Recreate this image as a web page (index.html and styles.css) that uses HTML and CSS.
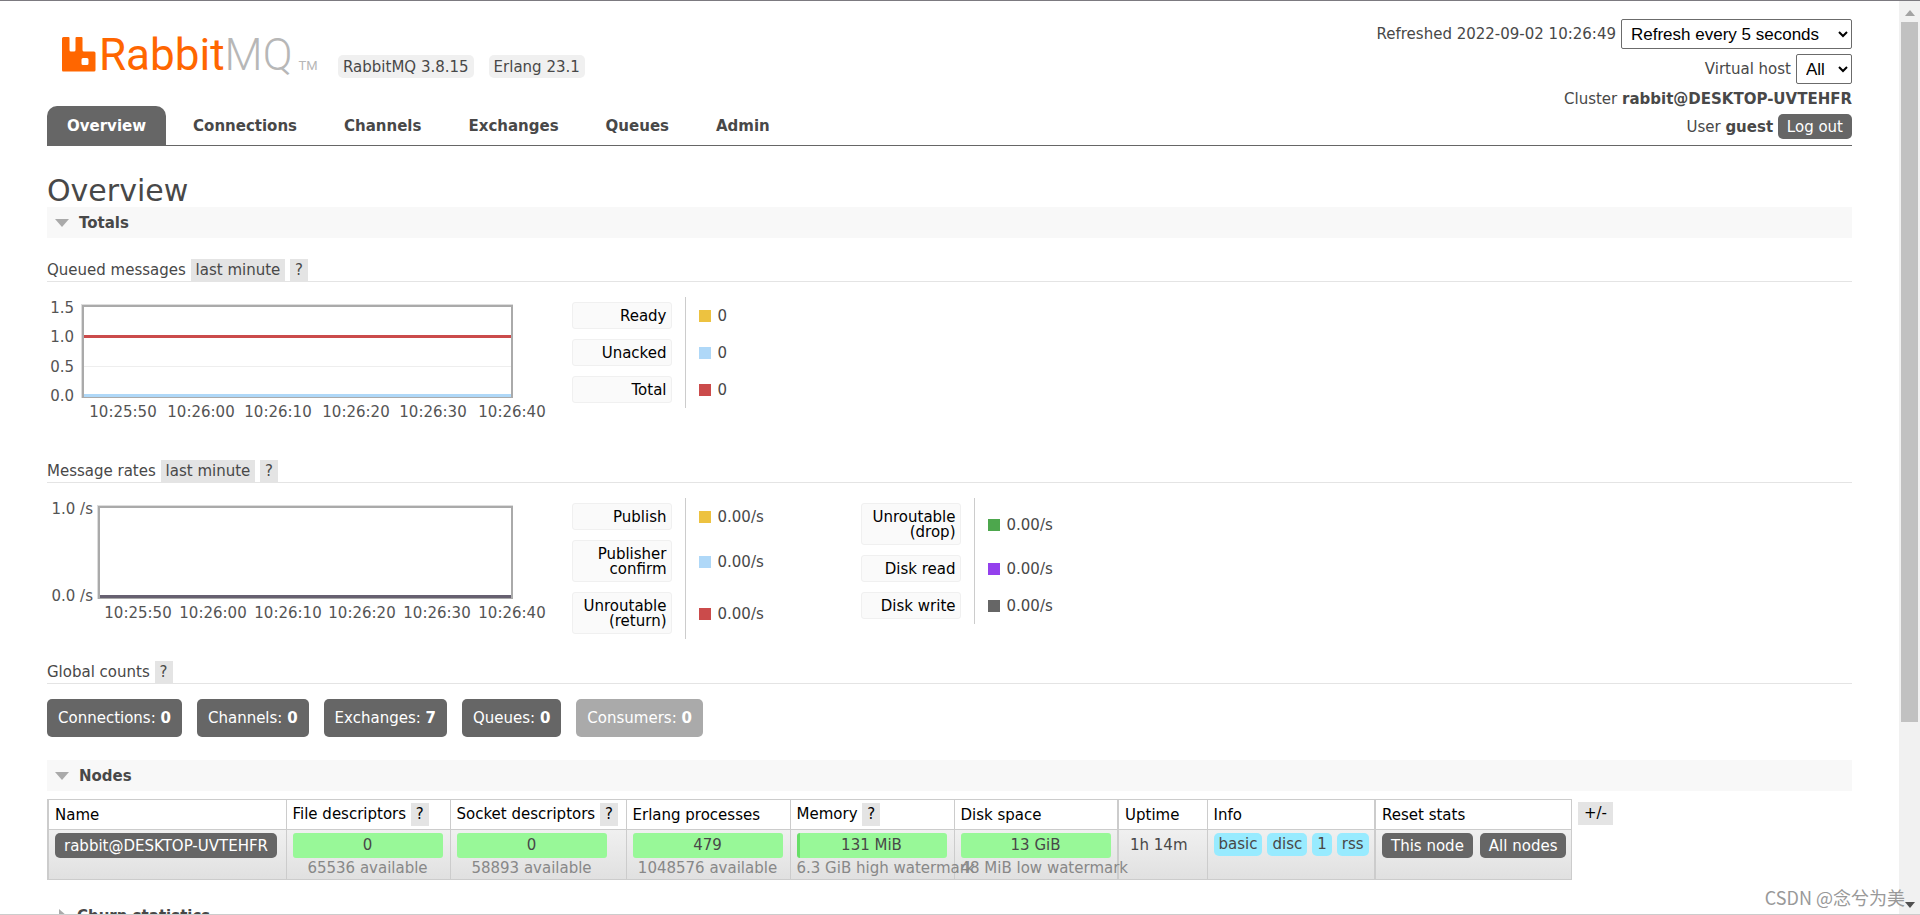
FILE: index.html
```html
<!DOCTYPE html>
<html lang="en">
<head>
<meta charset="utf-8">
<title>RabbitMQ Management</title>
<link rel="stylesheet" href="styles.css">
</head>
<body>
<div class="window">
<div class="page">
  <header class="header">
    <div class="brand">
      <a class="logo" href="#" aria-label="RabbitMQ">
        <svg class="logo-mark" viewBox="0 0 34 35" aria-hidden="true"><path fill="#f60" fill-rule="evenodd" d="M1.500 0h5q1 0 1 1v12q0 1.500 1.500 1.500h3q1.500 0 1.500-1.500V1q0-1 1-1h5q1 0 1 1v12q0 1.500 1.500 1.500h10q1.500 0 1.500 1.500v17q0 1.500-1.500 1.500h-31Q0 34.500 0 33V1.500Q0 0 1.500 0zM21 21q-1.500 0-1.500 1.500v4q0 1.500 1.500 1.500h4q1.500 0 1.500-1.500v-4q0-1.500-1.500-1.500z"/></svg>
        <span class="logo-text">Rabbit<span class="logo-mq">MQ</span></span><span class="logo-tm">TM</span>
      </a>
      <span class="version">RabbitMQ 3.8.15</span>
      <span class="version">Erlang 23.1</span>
    </div>
    <div class="status">
      <div class="status-row"><label for="refresh">Refreshed 2022-09-02 10:26:49</label><select id="refresh" class="select select-refresh"><option>Refresh every 5 seconds</option></select></div>
      <div class="status-row"><label for="vhost">Virtual host</label><select id="vhost" class="select select-vhost"><option>All</option></select></div>
      <div class="status-line">Cluster <b>rabbit@DESKTOP-UVTEHFR</b></div>
      <div class="status-line">User <b>guest</b> <button class="button">Log out</button></div>
    </div>
    <nav class="tabs">
      <a class="tab tab-active" href="#">Overview</a>
      <a class="tab" href="#">Connections</a>
      <a class="tab" href="#">Channels</a>
      <a class="tab" href="#">Exchanges</a>
      <a class="tab" href="#">Queues</a>
      <a class="tab" href="#">Admin</a>
    </nav>
  </header>

  <main>
    <h1 class="title">Overview</h1>
    <h2 class="section"><svg class="arrow" viewBox="0 0 14 8" aria-hidden="true"><path d="M0 0h14L7 8z"/></svg>Totals</h2>

    <h3 class="subhead">Queued messages <button class="chip">last minute</button> <button class="chip chip-help">?</button></h3>
    <div class="stats">
      <svg class="chart" viewBox="0 0 505 122" role="img" aria-label="Queued messages">
        <rect class="frame-edge" x="34" y="7" width="432" height="94"/>
        <rect class="frame" x="36" y="9" width="429" height="91"/>
        <path class="grid" d="M37 69.500h427"/>
        <path class="series red" d="M37 39.500h427"/>
        <path class="series blue" d="M37 98.500h427"/>
        <text class="end" x="27" y="16">1.5</text><text class="end" x="27" y="45">1.0</text><text class="end" x="27" y="75">0.5</text><text class="end" x="27" y="104">0.0</text>
        <text class="mid" x="76" y="120">10:25:50</text><text class="mid" x="154" y="120">10:26:00</text><text class="mid" x="231" y="120">10:26:10</text><text class="mid" x="309" y="120">10:26:20</text><text class="mid" x="386" y="120">10:26:30</text><text class="mid" x="465" y="120">10:26:40</text>
      </svg>
      <table class="legend">
        <tr><th><span class="key">Ready</span></th><td><i class="swatch yellow"></i>0</td></tr>
        <tr><th><span class="key">Unacked</span></th><td><i class="swatch blue"></i>0</td></tr>
        <tr><th><span class="key">Total</span></th><td><i class="swatch red"></i>0</td></tr>
      </table>
    </div>

    <h3 class="subhead">Message rates <button class="chip">last minute</button> <button class="chip chip-help">?</button></h3>
    <div class="stats">
      <svg class="chart" viewBox="0 0 505 122" role="img" aria-label="Message rates">
        <rect class="frame-edge" x="50" y="7" width="416" height="94"/>
        <rect class="frame" x="52" y="9" width="413" height="91"/>
        <path class="series dark" d="M53 98.500h411"/>
        <text class="end" x="46" y="16">1.0 /s</text><text class="end" x="46" y="103">0.0 /s</text>
        <text class="mid" x="91" y="120">10:25:50</text><text class="mid" x="166" y="120">10:26:00</text><text class="mid" x="241" y="120">10:26:10</text><text class="mid" x="315" y="120">10:26:20</text><text class="mid" x="390" y="120">10:26:30</text><text class="mid" x="465" y="120">10:26:40</text>
      </svg>
      <table class="legend">
        <tr><th><span class="key">Publish</span></th><td><i class="swatch yellow"></i>0.00/s</td></tr>
        <tr><th><span class="key">Publisher<br>confirm</span></th><td><i class="swatch blue"></i>0.00/s</td></tr>
        <tr><th><span class="key">Unroutable<br>(return)</span></th><td><i class="swatch red"></i>0.00/s</td></tr>
      </table>
      <table class="legend">
        <tr><th><span class="key">Unroutable<br>(drop)</span></th><td><i class="swatch green"></i>0.00/s</td></tr>
        <tr><th><span class="key">Disk read</span></th><td><i class="swatch purple"></i>0.00/s</td></tr>
        <tr><th><span class="key">Disk write</span></th><td><i class="swatch dark"></i>0.00/s</td></tr>
      </table>
    </div>

    <h3 class="subhead">Global counts <button class="chip chip-help">?</button></h3>
    <div class="counts">
      <a class="count" href="#">Connections: <b>0</b></a>
      <a class="count" href="#">Channels: <b>0</b></a>
      <a class="count" href="#">Exchanges: <b>7</b></a>
      <a class="count" href="#">Queues: <b>0</b></a>
      <span class="count count-off">Consumers: <b>0</b></span>
    </div>

    <h2 class="section"><svg class="arrow" viewBox="0 0 14 8" aria-hidden="true"><path d="M0 0h14L7 8z"/></svg>Nodes</h2>
    <div class="nodes">
      <table class="node-table">
        <colgroup><col class="c-name"><col class="c-bar"><col class="c-sock"><col class="c-bar"><col class="c-bar"><col class="c-bar"><col class="c-up"><col class="c-info"><col class="c-reset"></colgroup>
        <thead><tr><th>Name</th><th>File descriptors <button class="chip chip-help">?</button></th><th>Socket descriptors <button class="chip chip-help">?</button></th><th>Erlang processes</th><th>Memory <button class="chip chip-help">?</button></th><th class="group-end">Disk space</th><th>Uptime</th><th class="group-end">Info</th><th>Reset stats</th></tr></thead>
        <tbody><tr>
          <td><a class="button" href="#">rabbit@DESKTOP-UVTEHFR</a></td>
          <td><div class="bar">0</div><div class="note">65536 available</div></td>
          <td><div class="bar">0</div><div class="note">58893 available</div></td>
          <td><div class="bar">479</div><div class="note">1048576 available</div></td>
          <td><div class="bar bar-used">131 MiB</div><div class="note">6.3 GiB high watermark</div></td>
          <td class="group-end"><div class="bar">13 GiB</div><div class="note">48 MiB low watermark</div></td>
          <td><div class="uptime">1h 14m</div></td>
          <td class="group-end"><div class="tags"><span class="tag">basic</span><span class="tag">disc</span><span class="tag">1</span><span class="tag">rss</span></div></td>
          <td><div class="resets"><button class="button">This node</button><button class="button">All nodes</button></div></td>
        </tr></tbody>
      </table>
      <button class="chip columns">+/-</button>
    </div>

    <h2 class="section section-closed"><svg class="arrow arrow-right" viewBox="0 0 8 14" aria-hidden="true"><path d="M0 0v14l8-7z"/></svg>Churn statistics</h2>
  </main>
</div>
<div class="scrollbar" aria-hidden="true">
  <svg class="scroll-arrow" viewBox="0 0 10 6"><path fill="#a3a3a3" d="M0 6h10L5 0z"/></svg>
  <div class="thumb"></div>
  <svg class="scroll-arrow scroll-down" viewBox="0 0 10 6"><path fill="#505050" d="M0 0h10L5 6z"/></svg>
</div>
<div class="watermark">CSDN @念兮为美</div>
</div>
</body>
</html>
```
FILE: styles.css
```css
* { box-sizing: border-box; }
body { margin: 0; background: #fff; color: #484848; font: 15px/18px Verdana, "DejaVu Sans", sans-serif; }
button { font: inherit; color: inherit; border: 0; margin: 0; cursor: pointer; }
a { color: inherit; text-decoration: none; }
.window { position: relative; display: flex; height: 100vh; overflow: hidden; border-top: 1px solid #7c7a80; border-bottom: 1px solid #ccc; }
.page { flex: 1; min-width: 0; padding: 18px 47px 0; overflow: hidden; }

.header { display: grid; grid-template-columns: 1fr auto; grid-template-rows: 87px 39px; border-bottom: 1px solid #666; }
.brand { display: flex; align-items: flex-start; padding: 17px 0 0 15px; }
.logo { display: flex; align-items: flex-end; width: 276px; height: 36px; color: #f60; }
.logo-mark { width: 34px; height: 35px; margin-right: 3px; }
.logo-text { font: 44px/34px Roboto, sans-serif; }
.logo-mq { font-weight: 300; color: #b7b7b7; }
.logo-tm { margin-left: 6px; font: 13px/12px Roboto, sans-serif; color: #b7b7b7; }
.version { margin: 19px 15px 0 0; padding: 3px 5px 2px; border-radius: 5px; background: #f0f0f0; }
.status { grid-row: 1 / 3; grid-column: 2; text-align: right; }
.status-row { display: flex; justify-content: flex-end; align-items: center; gap: 5px; margin-bottom: 5px; }
.status-line { height: 25px; line-height: 21px; }
.select { height: 30px; padding: 0 5px; border: 1px solid #6b6b6b; border-radius: 2px; background: #fff; color: #000; font: 17px "Liberation Sans", Arial, sans-serif; }
.select-refresh { width: 231px; }
.select-vhost { width: 56px; }
.button { display: inline-block; padding: 4px 9px 3px; border-radius: 5px; background: #666; color: #fff; line-height: 18px; }
.tabs { grid-row: 2; grid-column: 1; display: flex; gap: 7px; font-weight: bold; }
.tab { padding: 11px 20px 10px; border-radius: 10px 10px 0 0; }
.tab-active { background: #666; color: #fff; }

.title { margin: 28px 0 0; font-size: 30px; line-height: 33px; font-weight: normal; }
.section { display: flex; align-items: center; gap: 10px; height: 31px; margin: 0; padding: 0 8px; background: #f8f8f8; font-size: 15px; font-weight: bold; }
.arrow { width: 14px; height: 8px; fill: #aaa; }
.arrow-right { width: 8px; height: 14px; margin-left: 4px; }
.subhead { height: 24px; margin: 20px 0 15px; border-bottom: 1px solid #e4e4e4; font-size: 15px; line-height: 24px; font-weight: normal; white-space: nowrap; }
.chip { height: 23px; padding: 0 5px; background: #e4e4e4; line-height: 23px; }
.stats { display: flex; align-items: flex-start; min-height: 142px; }
.chart { width: 505px; height: 122px; margin-right: 10px; overflow: visible; }
.chart text { fill: #545454; font-size: 15px; }
.end { text-anchor: end; }
.mid { text-anchor: middle; }
.frame-edge { fill: #ddd; }
.frame { fill: #fff; stroke: #aaa; stroke-width: 2; }
.grid { stroke: #eee; }
.series { fill: none; stroke-width: 3; }
.yellow { background: #edc240; }
.blue { background: #afd8f8; stroke: #afd8f8; }
.red { background: #cb4b4b; stroke: #cb4b4b; }
.green { background: #4da74d; }
.purple { background: #9440ed; }
.dark { background: #666; stroke: #666070; }
.legend { width: 289px; border-collapse: collapse; }
.legend th { width: 123px; padding: 5px 13px 5px 10px; border-right: 1px solid #ccc; font-weight: normal; }
.legend td { padding: 1px 0 0 13px; white-space: nowrap; }
.key { display: block; padding: 6px 4px 4px; border: 1px solid #f0f0f0; border-radius: 3px; background: #fafafa; color: #000; line-height: 15px; text-align: right; }
.swatch { display: inline-block; width: 12px; height: 12px; margin-right: 7px; vertical-align: -1px; }

.counts { display: flex; gap: 15px; margin-bottom: 23px; }
.count { padding: 10px 11px; border-radius: 5px; background: #666; color: #fff; }
.count-off { background: #aaa; }
.nodes { display: flex; align-items: flex-start; gap: 6px; margin-top: 8px; }
.node-table { width: 1525px; table-layout: fixed; border-collapse: collapse; border: 1px solid #ccc; border-left-width: 2px; }
.c-name { width: 238px; }
.c-bar { width: 164px; }
.c-sock { width: 176px; }
.c-up { width: 89px; }
.c-info { width: 168px; }
.node-table th { height: 30px; padding: 0 6px; border: 1px solid #ccc; color: #000; font-weight: normal; text-align: left; white-space: nowrap; }
.node-table td { height: 50px; padding: 3px 6px 0; border: 1px solid #ccc; vertical-align: top; white-space: nowrap; }
.node-table .group-end { border-right-width: 2px; }
.node-table tbody tr { background: linear-gradient(#f0f0f0, #e0e0e0); }
.bar { width: 150px; height: 25px; border-radius: 3px; background: #98f898; line-height: 25px; text-align: center; }
.bar-used { background: linear-gradient(90deg, #67df67 3px, #98f898 3px); }
.note { width: 150px; min-width: max-content; line-height: 20px; color: #888; text-align: center; }
.uptime { padding: 3px 5px; }
.tags, .resets { display: flex; gap: 5px; }
.resets { gap: 7px; }
.tag { padding: 2px 5px 3px; border-radius: 5px; background: #98ebff; }
.columns { margin-top: 3px; padding: 0 6px; color: #000; }
.section-closed { margin-top: 20px; background: #fff; }

.scrollbar { display: flex; flex-direction: column; align-items: center; width: 21px; padding: 9px 0 6px; background: #f1f1f1; }
.scroll-arrow { flex: none; width: 10px; height: 6px; }
.thumb { width: 17px; height: 700px; margin-top: 6px; background: #c1c1c1; }
.scroll-down { margin-top: auto; }
.watermark { position: absolute; right: 15px; bottom: 4px; color: #999; font: 18px/26px "Noto Sans CJK SC", sans-serif; }
```
